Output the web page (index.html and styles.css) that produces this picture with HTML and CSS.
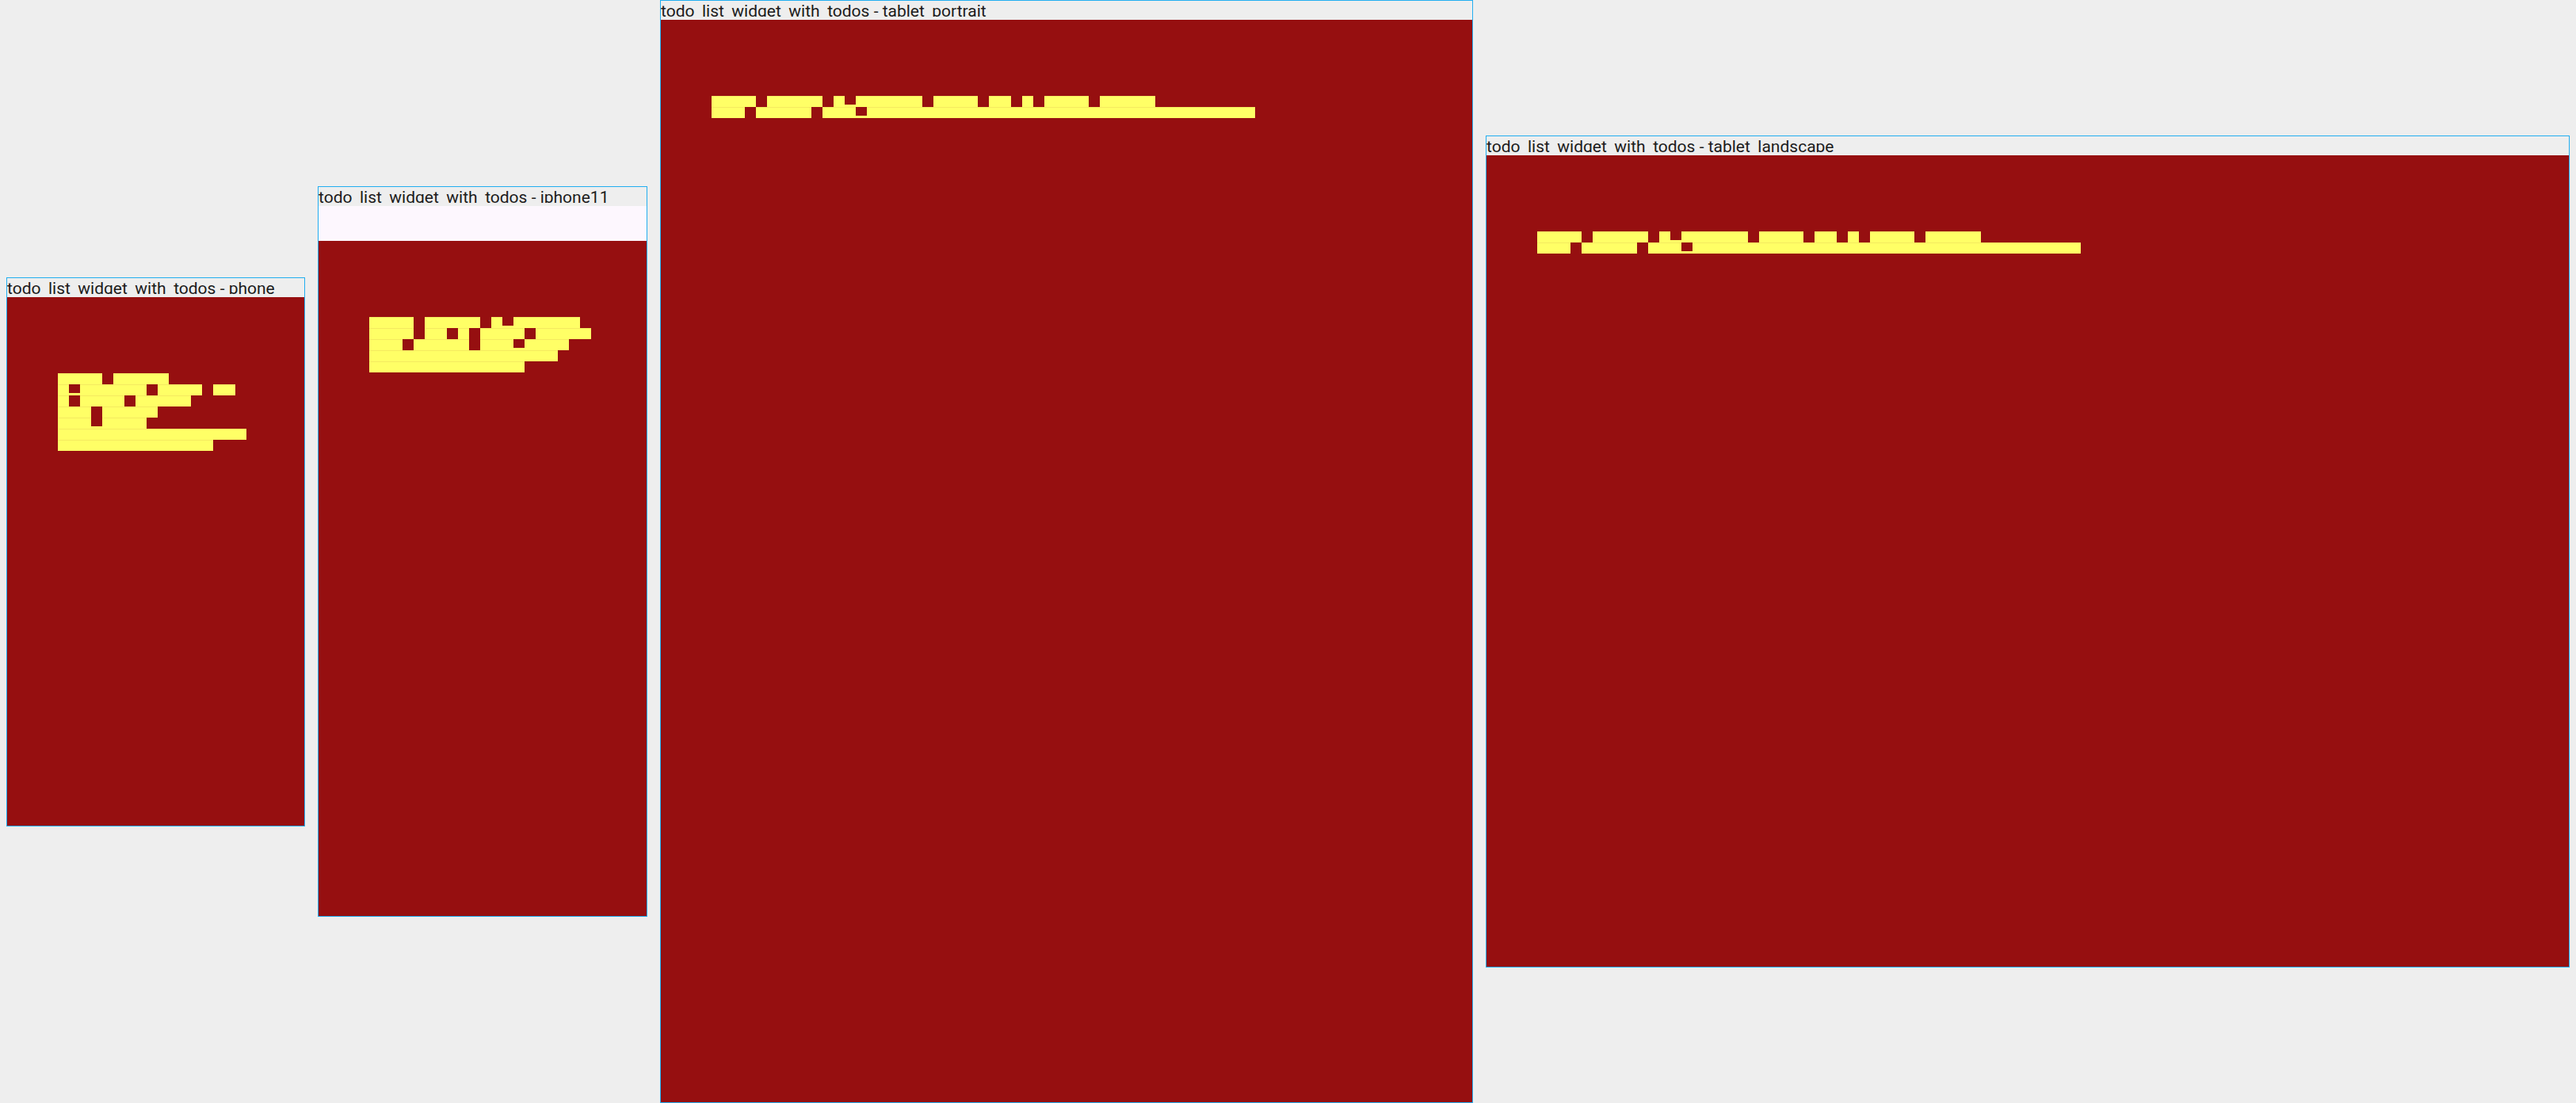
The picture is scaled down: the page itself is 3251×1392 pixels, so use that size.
FILE: index.html
```html
<!DOCTYPE html>
<html>
<head>
<meta charset="utf-8">
<title>todo_list_widget_with_todos</title>
<link rel="stylesheet" href="styles.css">
</head>
<body>
  <div class="frame">
    <div class="frame-title"><span>todo_list_widget_with_todos - phone</span></div>
    <div class="screen phone">
      <div class="error">
        <div class="row"><i class="y n4"></i><i class="s"></i><i class="y n5"></i></div>
        <div class="row"><i class="y"></i><i class="p"></i><i class="y n6"></i><i class="s"></i><i class="y n4"></i><i class="s"></i><i class="y n2"></i></div>
        <div class="row"><i class="y"></i><i class="s"></i><i class="y n4"></i><i class="s"></i><i class="y n5"></i></div>
        <div class="row"><i class="y n3"></i><i class="s"></i><i class="y n5"></i></div>
        <div class="row"><i class="y n3"></i><i class="p"></i><i class="y n4"></i></div>
        <div class="row"><i class="y n17"></i></div>
        <div class="row"><i class="y n14"></i></div>
      </div>
    </div>
  </div>

  <div class="frame">
    <div class="frame-title"><span>todo_list_widget_with_todos - iphone11</span></div>
    <div class="screen iphone">
      <div class="safe"></div>
      <div class="error">
        <div class="row"><i class="y n4"></i><i class="s"></i><i class="y n5"></i><i class="s"></i><i class="y"></i><i class="p"></i><i class="y n6"></i></div>
        <div class="row"><i class="y n4"></i><i class="s"></i><i class="y n2"></i><i class="s"></i><i class="y"></i><i class="s"></i><i class="y n4"></i><i class="s"></i><i class="y n5"></i></div>
        <div class="row"><i class="y n3"></i><i class="s"></i><i class="y n5"></i><i class="s"></i><i class="y n3"></i><i class="p"></i><i class="y n4"></i></div>
        <div class="row"><i class="y n17"></i></div>
        <div class="row"><i class="y n14"></i></div>
      </div>
    </div>
  </div>

  <div class="frame">
    <div class="frame-title"><span>todo_list_widget_with_todos - tablet_portrait</span></div>
    <div class="screen tablet-portrait">
      <div class="error">
        <div class="row"><i class="y n4"></i><i class="s"></i><i class="y n5"></i><i class="s"></i><i class="y"></i><i class="p"></i><i class="y n6"></i><i class="s"></i><i class="y n4"></i><i class="s"></i><i class="y n2"></i><i class="s"></i><i class="y"></i><i class="s"></i><i class="y n4"></i><i class="s"></i><i class="y n5"></i></div>
        <div class="row"><i class="y n3"></i><i class="s"></i><i class="y n5"></i><i class="s"></i><i class="y n3"></i><i class="p"></i><i class="y n35"></i></div>
      </div>
    </div>
  </div>

  <div class="frame">
    <div class="frame-title"><span>todo_list_widget_with_todos - tablet_landscape</span></div>
    <div class="screen tablet-landscape">
      <div class="error">
        <div class="row"><i class="y n4"></i><i class="s"></i><i class="y n5"></i><i class="s"></i><i class="y"></i><i class="p"></i><i class="y n6"></i><i class="s"></i><i class="y n4"></i><i class="s"></i><i class="y n2"></i><i class="s"></i><i class="y"></i><i class="s"></i><i class="y n4"></i><i class="s"></i><i class="y n5"></i></div>
        <div class="row"><i class="y n3"></i><i class="s"></i><i class="y n5"></i><i class="s"></i><i class="y n3"></i><i class="p"></i><i class="y n35"></i></div>
      </div>
    </div>
  </div>
</body>
</html>
```

FILE: styles.css
```css
html, body {
  margin: 0;
  padding: 0;
}

body {
  width: 3251px;
  height: 1392px;
  box-sizing: border-box;
  padding: 0 8px;
  background: #eeeeee;
  display: flex;
  align-items: center;
  gap: 16px;
  overflow: hidden;
  font-family: Roboto, "Liberation Sans", sans-serif;
}

.frame {
  flex: none;
  display: flex;
  flex-direction: column;
  border: 1px solid #22aef0;
}

.frame-title {
  height: 24px;
  background: #eeeeee;
  color: #1c1c1c;
}

.frame-title span {
  display: block;
  height: 20px;
  overflow: hidden;
  font-size: 21px;
  line-height: 27.6px;
  white-space: nowrap;
}

.screen {
  display: flex;
  flex-direction: column;
  background: #960f10;
}

.phone { width: 375px; height: 667px; }
.iphone { width: 414px; height: 896px; }
.tablet-portrait { width: 1024px; height: 1366px; }
.tablet-landscape { width: 1366px; height: 1024px; }

.safe {
  height: 44px;
  flex: none;
  background: #fdf7fe;
}

.error {
  flex: 1;
  padding: 96.33px 0 0 63.67px;
}

.row {
  display: flex;
  height: 14px;
}

.row i {
  display: block;
  flex: none;
  height: 14px;
  width: calc(var(--n, 1) * 14px);
}

.row .y {
  background: #ffff66;
  box-shadow: inset 0 1px 0 #f4ea60;
}

.row .p {
  background: linear-gradient(to bottom, transparent 11px, #ffff66 11px);
}

.n2 { --n: 2; }
.n3 { --n: 3; }
.n4 { --n: 4; }
.n5 { --n: 5; }
.n6 { --n: 6; }
.n14 { --n: 14; }
.n17 { --n: 17; }
.n35 { --n: 35; }
```
